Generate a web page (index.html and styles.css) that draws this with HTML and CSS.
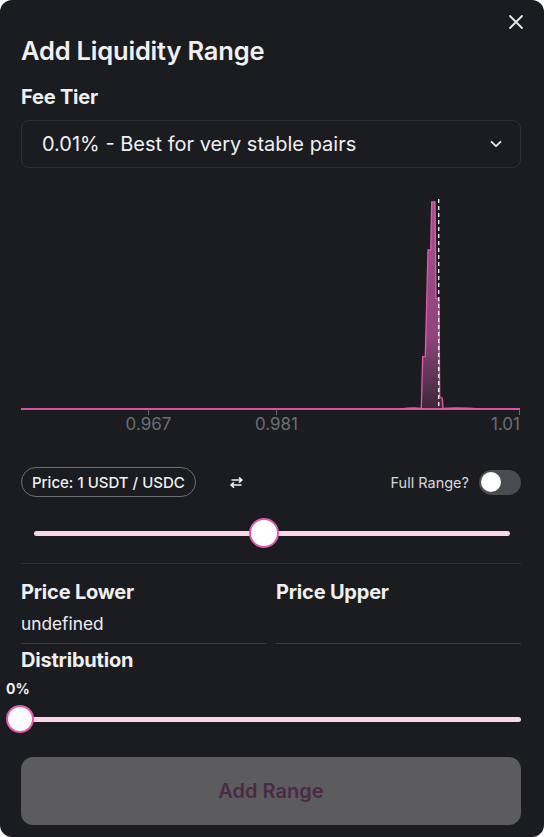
FILE: index.html
```html
<!DOCTYPE html>
<html lang="en">
<head>
    <meta charset="UTF-8" />
    <meta name="viewport" content="width=device-width, initial-scale=1">
    <title>Add Liquidity Range</title>
    <link rel="stylesheet" href="styles.css">
</head>
<body>
<div class="modal">
    <button class="close-btn" aria-label="Close">
        <svg width="16" height="16" viewBox="0 0 16 16"><path d="M2 2L14 14M14 2L2 14" stroke="#e8e8ea" stroke-width="1.8" stroke-linecap="round"/></svg>
    </button>
    <h1 class="title">Add Liquidity Range</h1>

    <div class="label">Fee Tier</div>
    <div class="select">
        <span>0.01% - Best for very stable pairs</span>
        <svg width="12" height="8" viewBox="0 0 12 8"><path d="M1.5 1.8L6 6.2L10.5 1.8" fill="none" stroke="#e8e8ea" stroke-width="1.8" stroke-linecap="round" stroke-linejoin="round"/></svg>
    </div>

    <svg class="chart" width="499" height="260" viewBox="0 0 499 260">
        <defs>
            <linearGradient id="fill" x1="0" y1="0" x2="0" y2="1">
                <stop offset="0%" stop-color="#a64f92"/>
                <stop offset="65%" stop-color="#8e447c"/>
                <stop offset="100%" stop-color="#3a2838"/>
            </linearGradient>
        </defs>
        <path d="M0 229 L380 229 Q390 227.5 400.3 228.3 L401.7 176.7 L404.3 176.7 L407 70 L409.7 70 L410.7 22 L414 22 L415 118.3 L418 118.3 L418.7 216.7 L421.3 218.3 L422 228.3 Q440 227.5 460 229 L499 229 Z" fill="url(#fill)" stroke="#e35aa9" stroke-width="1.3"/>
        <line x1="417.7" y1="19" x2="417.7" y2="229" stroke="#ffffff" stroke-width="1.3" stroke-dasharray="4 3"/>
        <line x1="0" y1="229" x2="499" y2="229" stroke="#e35aa9" stroke-width="1.5"/>
        <g stroke="#6c6e73" stroke-width="1">
            <line x1="127.5" y1="229" x2="127.5" y2="235"/>
            <line x1="255.5" y1="229" x2="255.5" y2="235"/>
            <line x1="498.5" y1="229" x2="498.5" y2="235"/>
        </g>
        <g class="tick-label">
            <text x="127.5" y="250" text-anchor="middle">0.967</text>
            <text x="255.5" y="250" text-anchor="middle">0.981</text>
            <text x="499" y="250" text-anchor="end">1.01</text>
        </g>
    </svg>

    <div class="price-row">
        <div class="price-pill">Price: 1 USDT / USDC</div>
        <button class="swap-btn" aria-label="Swap">
            <svg width="15" height="11" viewBox="0 0 15 11">
                <path d="M3 3H13M10.5 0.8L13 3L10.5 5.2" fill="none" stroke="#f0f0f2" stroke-width="1.6" stroke-linecap="round" stroke-linejoin="round"/>
                <path d="M12 8H2M4.5 5.8L2 8L4.5 10.2" fill="none" stroke="#f0f0f2" stroke-width="1.6" stroke-linecap="round" stroke-linejoin="round"/>
            </svg>
        </button>
        <div class="full-range">
            <span>Full Range?</span>
            <div class="toggle"><div class="toggle-knob"></div></div>
        </div>
    </div>

    <div class="slider range-slider">
        <div class="track"></div>
        <div class="thumb" style="left: 48.4%"></div>
    </div>

    <hr class="divider">

    <div class="bounds">
        <div class="bound">
            <div class="label">Price Lower</div>
            <div class="bound-value">undefined</div>
        </div>
        <div class="bound">
            <div class="label">Price Upper</div>
            <div class="bound-value"></div>
        </div>
    </div>

    <div class="label">Distribution</div>
    <div class="dist-value">0%</div>
    <div class="slider dist-slider">
        <div class="track"></div>
        <div class="thumb" style="left: 0%"></div>
    </div>

    <button class="add-btn" disabled>Add Range</button>
</div>
</body>
</html>
```

FILE: styles.css
```css
:root {
    --bg: #1b1c20;
    --fg: #f0f0f2;
    --muted: #6c6e73;
    --line: #2e3034;
    --pink: #e35aa9;
    --pink-light: #fcd6e6;
}
* { margin: 0; padding: 0; box-sizing: border-box; }
body {
    font-family: 'Inter', 'Noto Sans', sans-serif;
    background: #ffffff;
    width: 544px;
    height: 837px;
}
.modal {
    position: relative;
    width: 544px;
    height: 837px;
    background: var(--bg);
    border-radius: 12px;
    color: var(--fg);
    padding: 35px 23px 0 21px;
    display: flex;
    flex-direction: column;
}
.close-btn {
    position: absolute;
    top: 14px;
    right: 20px;
    width: 16px;
    height: 16px;
    background: none;
    border: none;
    cursor: pointer;
    display: flex;
}
.title {
    font-size: 25.5px;
    line-height: 32px;
    font-weight: 600;
    letter-spacing: -0.2px;
}
.label {
    font-size: 20px;
    line-height: 24px;
    font-weight: 700;
    letter-spacing: -0.2px;
}
.title + .label { margin-top: 18px; }
.select {
    margin-top: 11px;
    height: 48px;
    border: 1px solid var(--line);
    border-radius: 8px;
    display: flex;
    align-items: center;
    justify-content: space-between;
    padding: 0 18px 0 20px;
    font-size: 20px;
}
.chart {
    display: block;
    margin-top: 12px;
}
.tick-label text {
    fill: var(--muted);
    font-family: 'Inter', 'Noto Sans', sans-serif;
    font-size: 17px;
}
.price-row {
    margin-top: 27px;
    height: 30px;
    display: flex;
    align-items: center;
}
.price-pill {
    height: 30px;
    padding: 0 10px;
    border: 1px solid #6b7078;
    border-radius: 15px;
    display: flex;
    align-items: center;
    font-size: 15px;
    font-weight: 500;
}
.swap-btn {
    margin-left: 33px;
    background: none;
    border: none;
    display: flex;
    cursor: pointer;
}
.full-range {
    margin-left: auto;
    display: flex;
    align-items: center;
    gap: 10px;
    font-size: 14.5px;
    color: #d6d6da;
}
.toggle {
    width: 42px;
    height: 25px;
    border-radius: 13px;
    background: #4b4c51;
    padding: 2.5px 2px;
}
.toggle-knob {
    width: 20px;
    height: 20px;
    border-radius: 50%;
    background: #ffffff;
}
.slider {
    position: relative;
    display: flex;
    align-items: center;
}
.track {
    width: 100%;
    height: 5px;
    border-radius: 3px;
    background: var(--pink-light);
}
.thumb {
    position: absolute;
    top: 50%;
    border-radius: 50%;
    background: #ffffff;
    border: 2px solid var(--pink);
    transform: translate(-50%, -50%);
}
.range-slider {
    margin: 21px 11px 0 13px;
    height: 30px;
}
.range-slider .thumb { width: 30px; height: 30px; }
.divider {
    margin-top: 15px;
    border: none;
    border-top: 1px solid var(--line);
}
.bounds {
    margin-top: 16px;
    display: grid;
    grid-template-columns: 1fr 1fr;
    gap: 10px;
}
.bound-value {
    margin-top: 8px;
    height: 32px;
    font-size: 17.3px;
    line-height: 24px;
    border-bottom: 1px solid #3a3c40;
}
.bounds + .label { margin-top: 4px; }
.dist-value {
    margin: 9px 0 0 -15px;
    font-size: 14px;
    line-height: 16px;
    font-weight: 700;
}
.dist-slider {
    margin-top: 8px;
    height: 28px;
}
.dist-slider .thumb { width: 28px; height: 28px; margin-left: -1px; }
.add-btn {
    margin-top: 24px;
    height: 68px;
    border: none;
    border-radius: 12px;
    background: #5c5c5e;
    color: #4a2a44;
    font-family: inherit;
    font-size: 20px;
    font-weight: 600;
    cursor: not-allowed;
}
```
